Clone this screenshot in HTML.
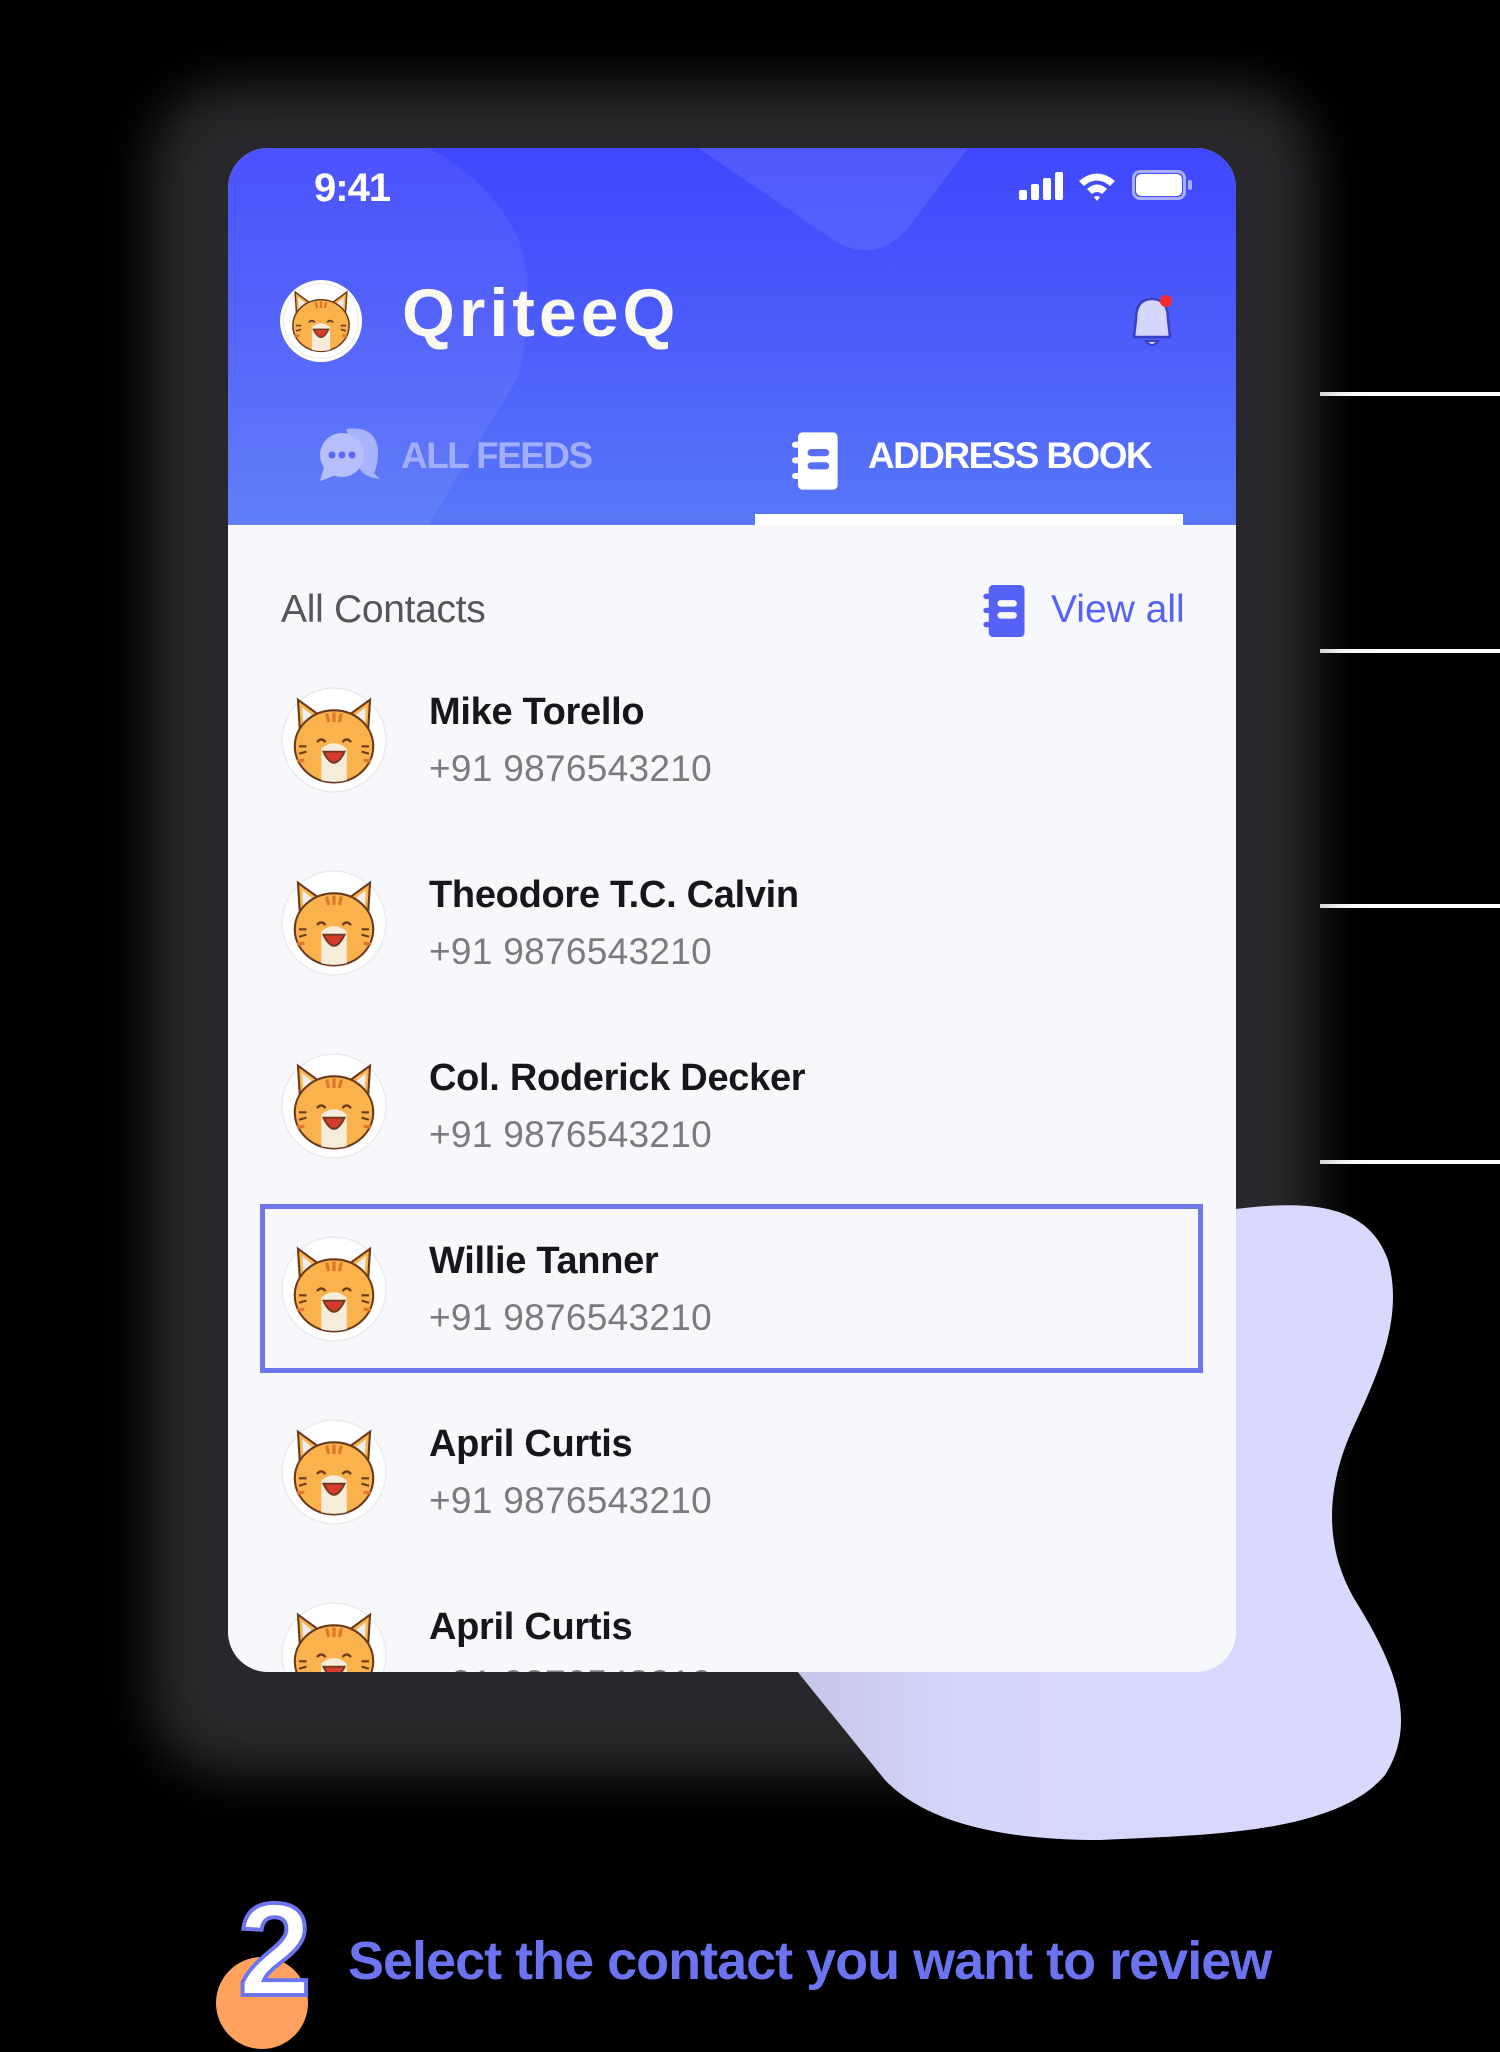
<!DOCTYPE html>
<html><head><meta charset="utf-8"><style>
*{margin:0;padding:0;box-sizing:border-box}
body{width:1500px;height:2052px;background:#000;position:relative;overflow:hidden;font-family:"Liberation Sans",sans-serif}
.abs{position:absolute}
.line{position:absolute;left:1320px;width:180px;height:4px;background:#fff}
#shadow{left:150px;top:85px;width:1165px;height:1690px;background:#4a4a50;border-radius:80px;filter:blur(25px);opacity:.55}
#phone{left:228px;top:148px;width:1008px;height:1524px;border-radius:40px;overflow:hidden;background:#f7f8fc}
#hdr{left:0;top:0;width:1008px;height:377px;background:linear-gradient(180deg,#4047fe 0%,#4d5ffa 55%,#5878f7 100%);overflow:hidden}
.name{position:absolute;left:201px;font-weight:bold;font-size:38px;color:#15171c;letter-spacing:-0.3px}
.ph{position:absolute;left:201px;font-size:37px;color:#7a7a80;letter-spacing:0.3px}
.av{position:absolute;left:53px;width:106px;height:106px}
</style></head><body>
<svg width="0" height="0" style="position:absolute">
<defs>
<symbol id="cat" viewBox="0 0 100 100">
<circle cx="50" cy="50" r="49" fill="#fff" stroke="#ececec" stroke-width="1.5"/>
<path d="M16 12 L38 28 L18 44 Z" fill="#f7b650" stroke="#6b3a1c" stroke-width="2"/>
<path d="M84 12 L62 28 L82 44 Z" fill="#f7b650" stroke="#6b3a1c" stroke-width="2"/>
<path d="M20 19 L31 28 L21 37 Z" fill="#eee"/><path d="M80 19 L69 28 L79 37 Z" fill="#eee"/>
<ellipse cx="50" cy="56" rx="37" ry="34" fill="#f9b24c" stroke="#6b3a1c" stroke-width="2"/>
<path d="M38 58 Q50 48 62 58 L62 88 Q50 91 38 88 Z" fill="#f6ecdc"/>
<path d="M43 25 l2 8 M50 24 v9 M57 25 l-2 8" stroke="#e0762a" stroke-width="3"/>
<path d="M34 52 q4 -5 8 0 M58 52 q4 -5 8 0" stroke="#6b3a1c" stroke-width="2.2" fill="none"/>
<path d="M40 61 Q50 82 60 61 Z" fill="#d93a2e" stroke="#6b3a1c" stroke-width="1.8"/>
<path d="M17 56 h7 M17 63 l7 -2 M76 56 h7 M76 61 l7 2" stroke="#6b3a1c" stroke-width="2"/>
<path d="M15 70 l7 -1 M85 70 l-7 -1" stroke="#e0762a" stroke-width="3"/>
</symbol>
<symbol id="book" viewBox="0 0 40 48">
<rect x="5" y="0" width="33" height="48" rx="4"/>
<rect x="0" y="8" width="9" height="5" rx="2.5"/><rect x="0" y="21" width="9" height="5" rx="2.5"/><rect x="0" y="34" width="9" height="5" rx="2.5"/>
</symbol>
</defs></svg>

<div class="line" style="top:392px"></div>
<div class="line" style="top:649px"></div>
<div class="line" style="top:904px"></div>
<div class="line" style="top:1160px"></div>

<div id="shadow" class="abs"></div>

<svg class="abs" style="left:0;top:0" width="1500" height="2052">
<defs><linearGradient id="bl" x1="0" y1="0" x2="1" y2="0"><stop offset="0" stop-color="#c3c4e6"/><stop offset=".3" stop-color="#d5d7fa"/><stop offset="1" stop-color="#d8d9fc"/></linearGradient></defs>
<path d="M1200 1214 C1290 1200 1365 1195 1388 1260 C1405 1320 1375 1380 1352 1430 C1330 1480 1320 1540 1355 1600 C1392 1660 1420 1720 1385 1775 C1335 1835 1200 1835 1100 1840 C1000 1840 925 1822 885 1780 L780 1650 L1200 1650 Z" fill="url(#bl)"/>
</svg>

<div id="phone" class="abs">
 <div id="hdr" class="abs">
  <svg class="abs" style="left:0;top:0" width="1008" height="377">
   <path d="M90 0 L200 0 Q260 30 290 90 Q310 150 290 230 L200 377 L0 377 L0 0 Z" fill="#fff" opacity=".06"/>
   <path d="M470 0 L740 0 L680 80 Q650 115 610 95 Z" fill="#fff" opacity=".09"/>
  </svg>
  <div class="abs" style="left:86px;top:18px;font-size:40px;color:#fff;font-weight:bold;letter-spacing:-1px">9:41</div>
  <div class="abs" style="left:791px;top:42px;width:8px;height:10px;background:#fff;border-radius:2px"></div>
  <div class="abs" style="left:803px;top:36px;width:8px;height:16px;background:#fff;border-radius:2px"></div>
  <div class="abs" style="left:815px;top:30px;width:8px;height:22px;background:#fff;border-radius:2px"></div>
  <div class="abs" style="left:827px;top:24px;width:8px;height:28px;background:#fff;border-radius:2px"></div>
  <svg class="abs" style="left:849px;top:22px" width="40" height="32" viewBox="0 0 40 32"><path d="M2 11 Q20 -4 38 11 L33 16 Q20 5 7 16 Z M10 19 Q20 10 30 19 L25 24 Q20 20 15 24 Z M17 27 L20 31 L23 27 Q20 25 17 27Z" fill="#fff"/></svg>
  <div class="abs" style="left:904px;top:22px;width:54px;height:30px;border:3px solid rgba(255,255,255,.55);border-radius:8px"></div>
  <div class="abs" style="left:908px;top:26px;width:46px;height:22px;background:#fff;border-radius:5px"></div>
  <div class="abs" style="left:960px;top:32px;width:4px;height:10px;background:rgba(255,255,255,.55);border-radius:2px"></div>
  <svg class="abs" style="left:52px;top:132px" width="82" height="82"><circle cx="41" cy="41" r="41" fill="#fff"/><use href="#cat" x="3" y="3" width="76" height="76"/></svg>
  <div class="abs" style="left:174px;top:126px;font-size:68px;font-weight:bold;color:#fbfaf2;letter-spacing:4px">QriteeQ</div>
  <svg class="abs" style="left:896px;top:145px" width="56" height="60" viewBox="0 0 56 60"><path d="M28 6 Q12 6 12 26 L10 44 L46 44 L44 26 Q44 6 28 6Z" fill="#d4d6fb" stroke="#3a3fc0" stroke-width="2.5"/><path d="M22 48 Q28 56 34 48Z" fill="#d4d6fb" stroke="#3a3fc0" stroke-width="2"/><circle cx="42" cy="8" r="6" fill="#f42a2a"/></svg>
  <svg class="abs" style="left:88px;top:277px" width="66" height="58" viewBox="0 0 66 58"><path d="M30 4 Q60 0 62 26 Q62 40 58 48 L64 54 Q48 52 44 44 Z" fill="#a9b3fb"/><circle cx="26" cy="30" r="22" fill="#b6bffb"/><path d="M8 42 L4 56 L20 50Z" fill="#b6bffb"/><circle cx="16" cy="30" r="3.5" fill="#5867f5"/><circle cx="26" cy="30" r="3.5" fill="#5867f5"/><circle cx="36" cy="30" r="3.5" fill="#5867f5"/></svg>
  <div class="abs" style="left:173px;top:287px;font-size:37px;font-weight:bold;color:#a2aefb;letter-spacing:-1.6px">ALL FEEDS</div>
  <svg class="abs" style="left:564px;top:284px;fill:#fff" width="48" height="58" viewBox="0 0 40 48"><use href="#book"/><rect x="13" y="14" width="18" height="6" rx="3" fill="#5a6ef8"/><rect x="13" y="25" width="18" height="6" rx="3" fill="#5a6ef8"/></svg>
  <div class="abs" style="left:640px;top:287px;font-size:37px;font-weight:bold;color:#fff;letter-spacing:-1.6px">ADDRESS BOOK</div>
  <div class="abs" style="left:527px;top:366px;width:428px;height:11px;background:#fff"></div>
 </div>

 <div class="abs" style="left:53px;top:440px;font-size:39px;color:#55565c;letter-spacing:-0.3px">All Contacts</div>
 <svg class="abs" style="left:752px;top:437px;fill:#5562f5" width="50" height="52" viewBox="0 0 40 48"><use href="#book"/><rect x="13" y="14" width="18" height="6" rx="3" fill="#f7f8fc"/><rect x="13" y="25" width="18" height="6" rx="3" fill="#f7f8fc"/></svg>
 <div class="abs" style="left:823px;top:440px;font-size:39px;color:#5562f5">View all</div>

 <svg class="av" style="top:539px"><use href="#cat" width="106" height="106"/></svg>
 <div class="name" style="top:543px">Mike Torello</div><div class="ph" style="top:600px">+91 9876543210</div>

 <svg class="av" style="top:722px"><use href="#cat" width="106" height="106"/></svg>
 <div class="name" style="top:726px">Theodore T.C. Calvin</div><div class="ph" style="top:783px">+91 9876543210</div>

 <svg class="av" style="top:905px"><use href="#cat" width="106" height="106"/></svg>
 <div class="name" style="top:909px">Col. Roderick Decker</div><div class="ph" style="top:966px">+91 9876543210</div>

 <div class="abs" style="left:32px;top:1056px;width:943px;height:169px;border:5px solid #6e76ea"></div>
 <svg class="av" style="top:1088px"><use href="#cat" width="106" height="106"/></svg>
 <div class="name" style="top:1092px">Willie Tanner</div><div class="ph" style="top:1149px">+91 9876543210</div>

 <svg class="av" style="top:1271px"><use href="#cat" width="106" height="106"/></svg>
 <div class="name" style="top:1275px">April Curtis</div><div class="ph" style="top:1332px">+91 9876543210</div>

 <svg class="av" style="top:1454px"><use href="#cat" width="106" height="106"/></svg>
 <div class="name" style="top:1458px">April Curtis</div><div class="ph" style="top:1515px">+91 9876543210</div>
</div>

<div class="abs" style="left:216px;top:1957px;width:92px;height:92px;border-radius:50%;background:#ffa25f"></div>
<div class="abs" style="left:238px;top:1884px;font-size:132px;font-weight:bold;color:#fff;-webkit-text-stroke:4px #6d75ee;line-height:1">2</div>
<div class="abs" style="left:348px;top:1930px;font-size:54px;font-weight:bold;color:#6b73f0;letter-spacing:-1px">Select the contact you want to review</div>
</body></html>
